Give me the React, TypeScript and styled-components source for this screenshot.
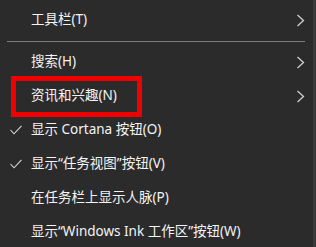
import React from "react";
import styled, { createGlobalStyle } from "styled-components";

const Global = createGlobalStyle`
  html, body { margin: 0; padding: 0; background: #2b2b2b; }
  body { font-family: "Noto Sans", "Noto Sans CJK SC", sans-serif; }
`;

const Menu = styled.div`
  width: 316px;
  height: 247px;
  box-sizing: border-box;
  padding-top: 3px;
  background: #2b2b2b;
  border-right: 3px solid #3a3a3a;
  display: flex;
  flex-direction: column;
  overflow: hidden;
`;

const Item = styled.div`
  position: relative;
  height: 34px;
  flex: 0 0 34px;
  display: grid;
  grid-template-columns: 31px 1fr 10px;
  align-items: center;
  padding-right: 7px;
  color: #f4f4f4;
  font-size: 13.5px;
  white-space: nowrap;
`;

const CheckCell = styled.span`
  display: flex;
  align-items: center;
  padding-left: 10px;
  height: 100%;
`;

const Label = styled.span`
  line-height: 1;
`;

const ChevronCell = styled.span`
  display: flex;
  align-items: center;
  justify-content: flex-start;
`;

const Separator = styled.div`
  flex: 0 0 1px;
  height: 1px;
  margin: 4px 8px 3px 7px;
  background: #7c7c7c;
`;

const Highlight = styled.span`
  position: absolute;
  left: 11px;
  top: -3px;
  width: 131px;
  height: 41px;
  box-sizing: border-box;
  border: 5px solid #f00000;
  pointer-events: none;
`;

const Chevron = () => (
  <svg width="9" height="13" viewBox="0 0 9 13">
    <polyline points="1.5,1 7.5,6.5 1.5,12" fill="none" stroke="#cfcfcf" strokeWidth="1.3" />
  </svg>
);

const Check = () => (
  <svg width="12" height="10" viewBox="0 0 12 10">
    <polyline points="0.5,5 4,8.8 11.5,0.8" fill="none" stroke="#d8d8d8" strokeWidth="1.1" />
  </svg>
);

type Entry = { label: string; sub?: boolean; checked?: boolean; mark?: boolean };

const MenuItem = ({ label, sub, checked, mark }: Entry) => (
  <Item>
    <CheckCell>{checked ? <Check /> : null}</CheckCell>
    <Label>{label}</Label>
    <ChevronCell>{sub ? <Chevron /> : null}</ChevronCell>
    {mark ? <Highlight /> : null}
  </Item>
);

export default function App() {
  return (
    <>
      <Global />
      <Menu>
        <MenuItem label="工具栏(T)" sub />
        <Separator />
        <MenuItem label="搜索(H)" sub />
        <MenuItem label="资讯和兴趣(N)" sub mark />
        <MenuItem label="显示 Cortana 按钮(O)" checked />
        <MenuItem label="显示“任务视图”按钮(V)" checked />
        <MenuItem label="在任务栏上显示人脉(P)" />
        <MenuItem label="显示“Windows Ink 工作区”按钮(W)" />
      </Menu>
    </>
  );
}
